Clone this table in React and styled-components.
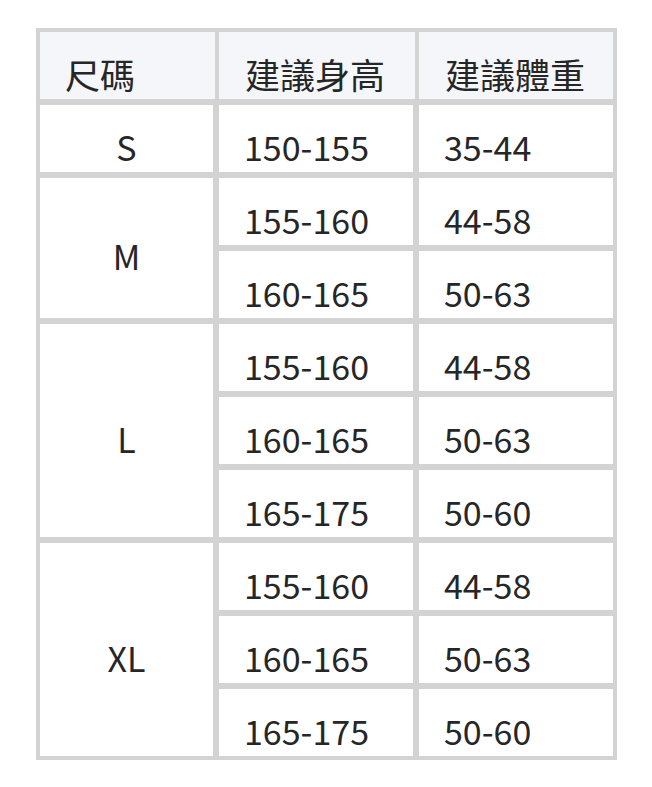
import React from 'react';
import styled, { createGlobalStyle } from 'styled-components';

const GlobalStyle = createGlobalStyle`
  body {
    margin: 0;
    background: #ffffff;
    font-family: "Noto Sans CJK TC", "Noto Sans", sans-serif;
    color: #262626;
  }
`;

const Frame = styled.div`
  margin: 28px 0 0 36px;
  width: 573px;
  padding: 4px;
  background: #d3d3d3;
  display: flex;
  flex-direction: column;
  gap: 6px;
`;

const HeadRow = styled.div`
  display: grid;
  grid-template-columns: 175px 196px 194px;
  column-gap: 4px;
`;

const Body = styled.div`
  display: grid;
  grid-template-columns: 173px 194px 194px;
  grid-auto-rows: 67px;
  gap: 6px;
`;

const Cell = styled.div`
  display: flex;
  align-items: center;
  box-sizing: border-box;
  padding: 16px 0 0 ${(p) => p.$indent || 25}px;
  background: #ffffff;
  font-size: 34px;
  line-height: 40px;
  white-space: nowrap;
`;

const HeadCell = styled(Cell)`
  height: 67px;
  background: #f5f6fa;
  font-size: 35px;
`;

const SizeCell = styled(Cell)`
  justify-content: center;
  padding-left: 0;
  grid-column: 1;
  grid-row: ${(p) => p.$row} / span ${(p) => p.$span};
`;

const DataCell = styled(Cell)`
  grid-column: ${(p) => p.$col};
  grid-row: ${(p) => p.$row};
`;

const sizes = [
  {
    size: 'S',
    rows: [['150-155', '35-44']],
  },
  {
    size: 'M',
    rows: [
      ['155-160', '44-58'],
      ['160-165', '50-63'],
    ],
  },
  {
    size: 'L',
    rows: [
      ['155-160', '44-58'],
      ['160-165', '50-63'],
      ['165-175', '50-60'],
    ],
  },
  {
    size: 'XL',
    rows: [
      ['155-160', '44-58'],
      ['160-165', '50-63'],
      ['165-175', '50-60'],
    ],
  },
];

const App = () => {
  let row = 1;
  const cells = [];
  sizes.forEach((group) => {
    cells.push(
      <SizeCell key={group.size} $row={row} $span={group.rows.length}>
        {group.size}
      </SizeCell>
    );
    group.rows.forEach(([height, weight], i) => {
      const r = row + i;
      cells.push(
        <DataCell key={`${group.size}-h-${i}`} $col={2} $row={r}>
          {height}
        </DataCell>
      );
      cells.push(
        <DataCell key={`${group.size}-w-${i}`} $col={3} $row={r}>
          {weight}
        </DataCell>
      );
    });
    row += group.rows.length;
  });

  return (
    <>
      <GlobalStyle />
      <Frame>
        <HeadRow>
          <HeadCell>尺碼</HeadCell>
          <HeadCell $indent={26}>建議身高</HeadCell>
          <HeadCell $indent={26}>建議體重</HeadCell>
        </HeadRow>
        <Body>{cells}</Body>
      </Frame>
    </>
  );
};

export default App;
